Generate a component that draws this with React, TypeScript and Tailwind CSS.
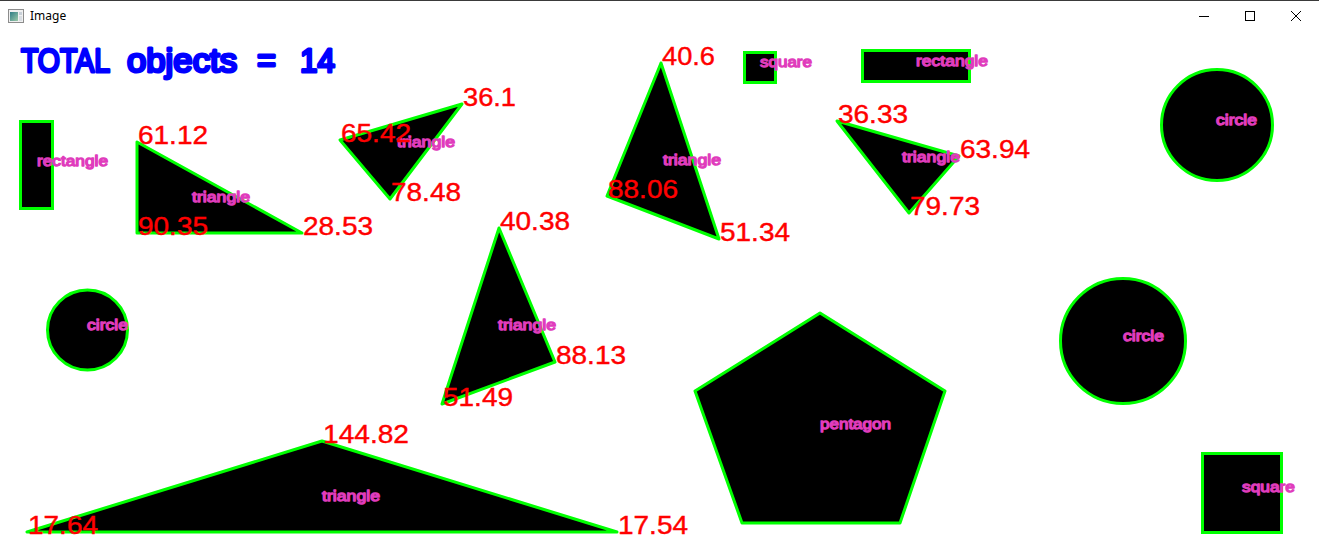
import React from "react";

type Pt = [number, number];

const GREEN = "#00ff00";
const RED = "#ff0000";
const PINK = "#e03cbc";

// triangles: vertices with their angle labels
const triangles: { pts: Pt[]; angles: string[]; label: Pt }[] = [
  { pts: [[137, 142], [137, 233], [302, 233]], angles: ["61.12", "90.35", "28.53"], label: [192, 202] },
  { pts: [[340, 140], [462, 104], [390, 199]], angles: ["65.42", "36.1", "78.48"], label: [397, 147] },
  { pts: [[661, 63], [607, 196], [719, 239]], angles: ["40.6", "88.06", "51.34"], label: [663, 165] },
  { pts: [[837, 121], [959, 156], [909, 213]], angles: ["36.33", "63.94", "79.73"], label: [902, 162] },
  { pts: [[499, 228], [555, 362], [442, 404]], angles: ["40.38", "88.13", "51.49"], label: [498, 330] },
  { pts: [[322, 441], [27, 532], [617, 532]], angles: ["144.82", "17.64", "17.54"], label: [322, 501] },
];

const rects = [
  { x: 20.5, y: 121.5, w: 32, h: 87 },
  { x: 744.5, y: 52.5, w: 31, h: 30 },
  { x: 862.5, y: 50.5, w: 107, h: 31 },
  { x: 1202.5, y: 453.5, w: 79, h: 79 },
];

const circles = [
  { cx: 87.5, cy: 330, r: 40 },
  { cx: 1217, cy: 125, r: 55.5 },
  { cx: 1123, cy: 341, r: 62.5 },
];

const labels: { text: string; x: number; y: number; w: number }[] = [
  { text: "rectangle", x: 37, y: 166, w: 71 },
  { text: "square", x: 760, y: 67, w: 52 },
  { text: "rectangle", x: 916, y: 66, w: 72 },
  { text: "square", x: 1242, y: 492, w: 53 },
  { text: "circle", x: 87, y: 330, w: 41 },
  { text: "circle", x: 1216, y: 125, w: 41 },
  { text: "circle", x: 1123, y: 341, w: 41 },
  { text: "pentagon", x: 820, y: 429, w: 71 },
];

const numWidth = (s: string) => (s.length === 4 ? 53 : s.length === 6 ? 86 : 70);

const WindowIcon = () => (
  <svg width="16" height="14" viewBox="0 0 16 14">
    <defs>
      <linearGradient id="pane" x1="0" y1="0" x2="1" y2="1">
        <stop offset="0" stopColor="#2f7d86" />
        <stop offset="1" stopColor="#9cc9a8" />
      </linearGradient>
    </defs>
    <rect x="0.5" y="0.5" width="15" height="13" fill="#f0f0f0" stroke="#8c8c8c" />
    <rect x="2" y="3" width="8" height="9" fill="url(#pane)" />
    <rect x="11" y="3" width="3" height="3" fill="#c8d0d8" />
    <rect x="11" y="7" width="3" height="5" fill="#d8dde2" />
  </svg>
);

export default function App() {
  return (
    <div className="w-[1319px] h-[557px] bg-white overflow-hidden flex flex-col">
      <div className="h-[31px] shrink-0 border-t border-[#3a3a3a] flex items-center pl-[8px] gap-[6px] font-['Segoe_UI','Noto_Sans',sans-serif]">
        <WindowIcon />
        <span className="text-[12px] text-black leading-none">Image</span>
        <div className="ml-auto flex items-center h-full">
          <button className="w-[46px] h-full flex items-center justify-center">
            <svg width="12" height="12" viewBox="0 0 12 12">
              <line x1="1" y1="6.5" x2="11" y2="6.5" stroke="#000" strokeWidth="1" />
            </svg>
          </button>
          <button className="w-[46px] h-full flex items-center justify-center">
            <svg width="12" height="12" viewBox="0 0 12 12">
              <rect x="1.5" y="1.5" width="9" height="9" fill="none" stroke="#000" strokeWidth="1" />
            </svg>
          </button>
          <button className="w-[46px] h-full flex items-center justify-center">
            <svg width="12" height="12" viewBox="0 0 12 12">
              <path d="M1 1 L11 11 M11 1 L1 11" stroke="#000" strokeWidth="1" />
            </svg>
          </button>
        </div>
      </div>

      <svg width="1319" height="526" viewBox="0 31 1319 526" className="block">
        <g fontFamily="'Liberation Sans', Arial, sans-serif">
          <text
            y="72"
            fontSize="34"
            fill="#0000ff"
            stroke="#0000ff"
            strokeWidth="3"
            strokeLinejoin="round"
            lengthAdjust="spacingAndGlyphs"
          >
            <tspan x="21" textLength="88" lengthAdjust="spacingAndGlyphs">TOTAL</tspan>{" "}
            <tspan x="127" textLength="110" lengthAdjust="spacingAndGlyphs">objects</tspan>{" "}
            <tspan x="257" textLength="19" lengthAdjust="spacingAndGlyphs">=</tspan>{" "}
            <tspan x="300" textLength="35" lengthAdjust="spacingAndGlyphs">14</tspan>
          </text>

          {rects.map((r, i) => (
            <rect key={i} x={r.x} y={r.y} width={r.w} height={r.h} fill="#000" stroke={GREEN} strokeWidth="3" />
          ))}

          {circles.map((c, i) => (
            <circle key={i} cx={c.cx} cy={c.cy} r={c.r} fill="#000" stroke={GREEN} strokeWidth="3" />
          ))}

          <polygon
            points="820,313 945,391 900,523 742,523 695,391"
            fill="#000"
            stroke={GREEN}
            strokeWidth="3"
            strokeLinejoin="round"
          />

          {triangles.map((t, i) => (
            <polygon
              key={i}
              points={t.pts.map((p) => p.join(",")).join(" ")}
              fill="#000"
              stroke={GREEN}
              strokeWidth="3"
              strokeLinejoin="round"
            />
          ))}

          {labels.map((l, i) => (
            <text
              key={i}
              x={l.x}
              y={l.y}
              fontSize="15"
              fill={PINK}
              stroke={PINK}
              strokeWidth="1.3"
              strokeLinejoin="round"
              textLength={l.w}
              lengthAdjust="spacingAndGlyphs"
            >
              {l.text}
            </text>
          ))}

          {triangles.map((t, i) => (
            <text
              key={"t" + i}
              x={t.label[0]}
              y={t.label[1]}
              fontSize="15"
              fill={PINK}
              stroke={PINK}
              strokeWidth="1.3"
              strokeLinejoin="round"
              textLength="58"
              lengthAdjust="spacingAndGlyphs"
            >
              triangle
            </text>
          ))}

          {triangles.map((t, i) =>
            t.pts.map((p, j) => (
              <text
                key={i + "-" + j}
                x={p[0] + 1}
                y={p[1] + 2}
                fontSize="25"
                fill={RED}
                stroke={RED}
                strokeWidth="0.4"
                textLength={numWidth(t.angles[j])}
                lengthAdjust="spacingAndGlyphs"
              >
                {t.angles[j]}
              </text>
            ))
          )}
        </g>
      </svg>
    </div>
  );
}
